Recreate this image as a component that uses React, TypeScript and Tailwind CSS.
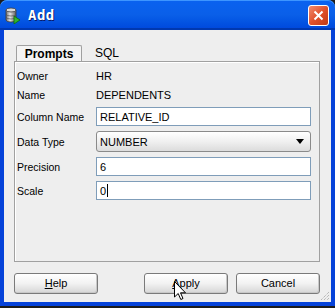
import React from 'react';

const font = { fontFamily: '"Liberation Sans", Arial, sans-serif' };

const DbIcon: React.FC = () => (
  <svg width="16" height="17" viewBox="0 0 16 17">
    <defs>
      <linearGradient id="cyl" x1="0" x2="1" y1="0" y2="0">
        <stop offset="0" stopColor="#6b6b6b" />
        <stop offset="0.4" stopColor="#e8e8e8" />
        <stop offset="1" stopColor="#5a5a5a" />
      </linearGradient>
    </defs>
    <path d="M1 3 v10 a5 2 0 0 0 10 0 v-10 z" fill="url(#cyl)" stroke="#3a3a3a" strokeWidth="0.8" />
    <ellipse cx="6" cy="3" rx="5" ry="2" fill="#d8d8d8" stroke="#3a3a3a" strokeWidth="0.8" />
    <path d="M1 7 a5 2 0 0 0 10 0 M1 10 a5 2 0 0 0 10 0" fill="none" stroke="#555" strokeWidth="0.7" />
    <path d="M9 9 l6 4 l-6 4 z" fill="#2fb52f" stroke="#0d6b0d" strokeWidth="0.8" />
  </svg>
);

const Cursor: React.FC = () => (
  <svg width="13" height="20" viewBox="0 0 13 20" className="absolute left-[29px] top-[7px]">
    <path d="M0.5 0.5 V16 L4.2 12.5 L6.8 18.5 L9 17.5 L6.5 11.8 H11.5 Z" fill="#fff" stroke="#000" strokeWidth="1" />
  </svg>
);

const Field: React.FC<{ label: string; children: React.ReactNode }> = ({ label, children }) => (
  <div className="flex items-center leading-[14px]">
    <div className="w-[79px] shrink-0 text-[10.5px] leading-[14px] text-black">{label}</div>
    <div className="flex-1">{children}</div>
  </div>
);

const TextBox: React.FC<{ value: string; caret?: boolean }> = ({ value, caret }) => (
  <div className="h-[19px] border border-[#7f9db9] bg-white flex items-center pl-[3px] text-[11px] text-black">
    {value}
    {caret && <span className="inline-block w-px h-[13px] bg-black ml-px" />}
  </div>
);

const Button: React.FC<{ children: React.ReactNode; extra?: React.ReactNode }> = ({ children, extra }) => (
  <div className="relative w-[84px] h-[21px] rounded-[3px] border border-[#7a7a7a] bg-gradient-to-b from-white via-[#f2f2f2] to-[#d6d6d6] flex items-center justify-center text-[11px] text-black shadow-[inset_-1px_-1px_0_#c8c8c8]">
    {children}
    {extra}
  </div>
);

export default function App() {
  return (
    <div className="w-[335px] h-[308px] flex flex-col bg-[#1c1c1c]" style={font}>
      <div className="h-[306px] flex flex-col">
        {/* title bar */}
        <div className="h-[30px] shrink-0 rounded-t-[7px] bg-gradient-to-b from-[#0a62f0] via-[#0a5fe8] to-[#0046dc] flex items-center pl-[5px] pr-[6px] shadow-[inset_0_1px_0_#3d95ff,inset_0_-2px_0_#0038b0]">
          <DbIcon />
          <span className="ml-[7px] text-white text-[14px] font-bold tracking-[0.5px] [text-shadow:1px_1px_0_#0a1a6a]" style={{ fontFamily: '"DejaVu Sans Mono", monospace' }}>
            Add
          </span>
          <div className="ml-auto w-[21px] h-[21px] rounded-[3px] border border-white bg-gradient-to-br from-[#f08a6c] via-[#e0512b] to-[#c13a14] flex items-center justify-center">
            <svg width="11" height="11" viewBox="0 0 11 11">
              <path d="M1.5 1.5 L9.5 9.5 M9.5 1.5 L1.5 9.5" stroke="#fff" strokeWidth="2" />
            </svg>
          </div>
        </div>

        {/* body */}
        <div className="flex-1 relative flex flex-col bg-[#eeeeee] border-x-[4px] border-b-[4px] border-[#0542d9] pt-[15px] pl-[10px] pr-[11px]">
          {/* tabs */}
          <div className="flex items-end h-[16px] text-[12px]">
            <div className="ml-[2px] w-[66px] h-[16px] border border-b-0 border-[#a0a0a0] rounded-t-[2px] bg-[#f4f4f4] flex items-center justify-center font-bold text-black">
              Prompts
            </div>
            <div className="ml-[13px] h-[16px] flex items-center text-black">SQL</div>
          </div>

          {/* panel */}
          <div className="h-[201px] border border-[#a0a0a0] shadow-[inset_1px_1px_0_#ffffff] pl-[2px] pr-[8px] pt-[7px] flex flex-col">
            <div className="flex flex-col gap-[5px]">
              <Field label="Owner">
                <div className="h-[14px] flex items-center text-[11px]">HR</div>
              </Field>
              <Field label="Name">
                <div className="h-[14px] flex items-center text-[11px]">DEPENDENTS</div>
              </Field>
              <Field label="Column Name">
                <TextBox value="RELATIVE_ID" />
              </Field>
              <Field label="Data Type">
                <div className="h-[21px] rounded-[3px] border border-[#8a8a8a] bg-gradient-to-b from-white via-[#f0f0f0] to-[#dcdcdc] flex items-center pl-[3px] pr-[6px] text-[11px]">
                  NUMBER
                  <svg width="8" height="5" viewBox="0 0 8 5" className="ml-auto">
                    <path d="M0 0 H8 L4 5 Z" fill="#000" />
                  </svg>
                </div>
              </Field>
              <Field label="Precision">
                <TextBox value="6" />
              </Field>
              <Field label="Scale">
                <TextBox value="0" caret />
              </Field>
            </div>
          </div>

          {/* buttons */}
          <div className="mt-[11px] flex items-center">
            <Button>
              <span><span className="underline">H</span>elp</span>
            </Button>
            <div className="ml-auto flex gap-[8px]">
              <Button extra={<Cursor />}>
                <span><span className="underline">A</span>pply</span>
              </Button>
              <Button>Cancel</Button>
            </div>
          </div>

          {/* resize grip */}
          <svg width="10" height="10" viewBox="0 0 10 10" className="absolute right-[1px] bottom-[1px]">
            <path d="M9 1 L1 9 M9 4 L4 9 M9 7 L7 9" stroke="#a0a0a0" strokeWidth="1" strokeDasharray="1 1" />
          </svg>
        </div>
      </div>
    </div>
  );
}
